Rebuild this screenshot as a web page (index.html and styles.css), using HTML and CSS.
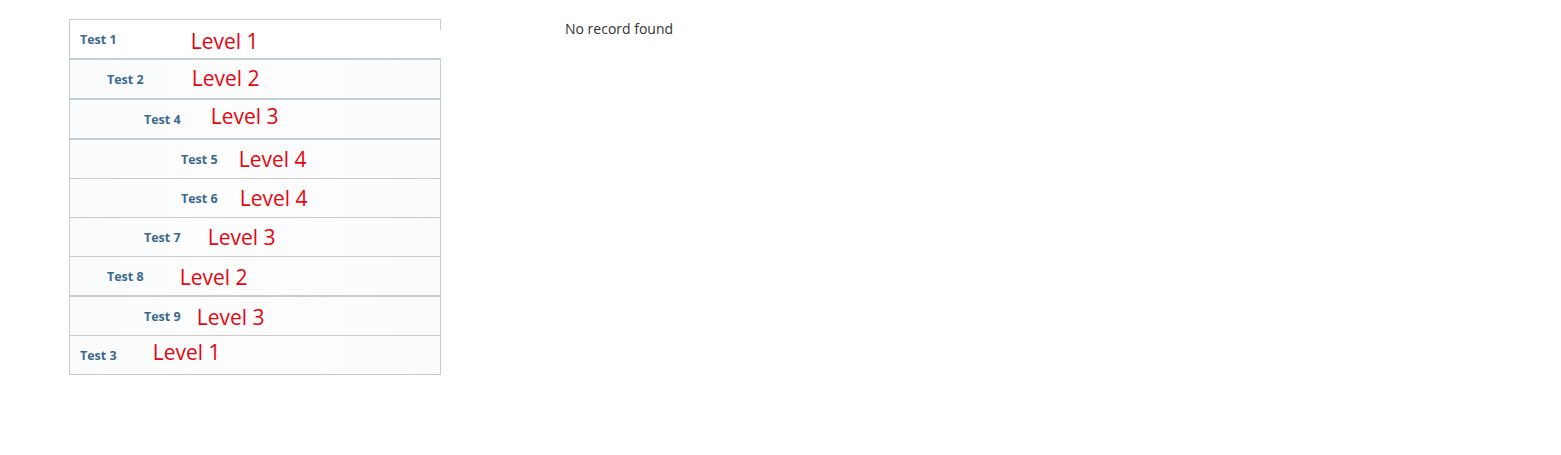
FILE: index.html
```html
<!DOCTYPE html>
<html>
<head>
<meta charset="utf-8">
<title>Tree</title>
<link rel="stylesheet" href="styles.css">
</head>
<body>
<div class="page">
  <div class="tree">
    <div class="row first thick-blue lvl-1"><span class="name">Test 1</span><span class="level">Level 1</span></div>
    <div class="row thick-blue lvl-2"><span class="name">Test 2</span><span class="level">Level 2</span></div>
    <div class="row thick-blue lvl-3"><span class="name">Test 4</span><span class="level">Level 3</span></div>
    <div class="row lvl-4"><span class="name">Test 5</span><span class="level">Level 4</span></div>
    <div class="row lvl-4"><span class="name">Test 6</span><span class="level">Level 4</span></div>
    <div class="row lvl-3"><span class="name">Test 7</span><span class="level">Level 3</span></div>
    <div class="row thick-grey lvl-2"><span class="name">Test 8</span><span class="level">Level 2</span></div>
    <div class="row lvl-3"><span class="name">Test 9</span><span class="level">Level 3</span></div>
    <div class="row lvl-1"><span class="name">Test 3</span><span class="level">Level 1</span></div>
  </div>
  <div class="empty">No record found</div>
</div>
</body>
</html>
```

FILE: styles.css
```css
html, body {
  margin: 0;
  padding: 0;
  background: #ffffff;
}

body {
  font-family: "Open Sans", "Liberation Sans", sans-serif;
}

.page {
  display: flex;
  align-items: flex-start;
  gap: 124px;
  padding: 19px 0 0 69px;
}

.tree {
  width: 370px;
  border: 1px solid #c9cdd1;
  border-bottom-color: #c8c8c8;
  display: flex;
  flex-direction: column;
}

.row {
  position: relative;
  height: 38px;
  display: flex;
  align-items: center;
  border-bottom: 1px solid #cacaca;
  background: linear-gradient(90deg, #fafbfc 0%, #fdfdfd 50%, #fbfbfc 100%);
}

.row:last-child {
  border-bottom: none;
}

.row.first {
  background: #ffffff;
  margin-right: -1px;
}

.row.first::after {
  content: "";
  position: absolute;
  right: 0;
  top: 0;
  width: 1px;
  height: 10px;
  background: #c9cdd1;
}

.row.thick-blue {
  border-bottom: 2px solid #c3d0da;
}

.row.thick-grey {
  border-bottom: 2px solid #c8c9ca;
}

.name {
  font-size: 12.5px;
  font-weight: 700;
  color: #3b6a8f;
  white-space: nowrap;
}

.level {
  font-size: 21px;
  color: #e8050f;
  white-space: nowrap;
}

/* indentation per depth */
.lvl-1 .name { margin-left: 10px; }
.lvl-2 .name { margin-left: 37px; }
.lvl-3 .name { margin-left: 74px; }
.lvl-4 .name { margin-left: 111px; }

/* spacing between name and level label, row by row */
.row:nth-child(1) .name { margin-right: 74px; }
.row:nth-child(1) .level { margin-top: 3px; }
.row:nth-child(2) .name { margin-right: 48px; }
.row:nth-child(2) .level { margin-top: -2px; }
.row:nth-child(3) .name { margin-right: 30px; }
.row:nth-child(3) .level { margin-top: -6px; }
.row:nth-child(4) .name { margin-right: 21px; }
.row:nth-child(4) .level { margin-top: 0; }
.row:nth-child(5) .name { margin-right: 22px; }
.row:nth-child(5) .level { margin-top: 0; }
.row:nth-child(6) .name { margin-right: 27px; }
.row:nth-child(6) .level { margin-top: 0; }
.row:nth-child(7) .name { margin-right: 36px; }
.row:nth-child(7) .level { margin-top: 2px; }
.row:nth-child(8) .name { margin-right: 16px; }
.row:nth-child(8) .level { margin-top: 2px; }
.row:nth-child(9) .name { margin-right: 36px; }
.row:nth-child(9) .level { margin-top: -6px; }

.empty {
  font-size: 14px;
  color: #333333;
  line-height: 20px;
}
```
